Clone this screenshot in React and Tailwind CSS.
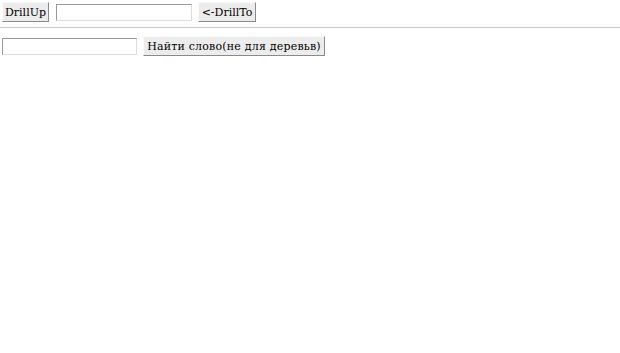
export default function App() {
  const btn =
    "h-[20px] bg-[#ececec] border border-t-[#fafafa] border-l-[#fafafa] border-r-[#8a8a8a] border-b-[#8a8a8a] text-[11px] leading-none text-black";
  const inp =
    "h-[17px] bg-white border border-t-[#9a9a9a] border-l-[#9a9a9a] border-r-[#dcdcdc] border-b-[#dcdcdc]";
  return (
    <div className="w-[620px] h-[353px] bg-white font-['DejaVu_Serif',serif]">
      <div className="flex items-center gap-[6px] pl-[2px] pt-[2px]">
        <button className={`${btn} w-[47px]`}>DrillUp</button>
        <input className={`${inp} w-[136px] ml-[1px]`} />
        <button className={`${btn} w-[58px]`}>&lt;-DrillTo</button>
      </div>
      <hr className="mt-[5px] border-t border-[#c8c8c8]" />
      <div className="flex items-center gap-[6px] pl-[2px] pt-[8px]">
        <input className={`${inp} w-[135px]`} />
        <button className={`${btn} w-[182px] tracking-[0.2px]`}>Найти слово(не для деревьв)</button>
      </div>
    </div>
  );
}
